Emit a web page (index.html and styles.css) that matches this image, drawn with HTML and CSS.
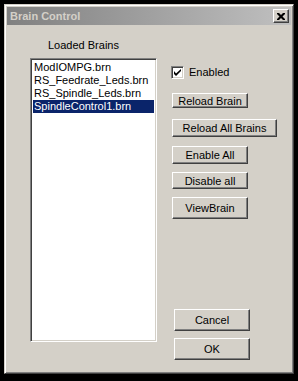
FILE: index.html
```html
<!DOCTYPE html>
<html lang="en">
<head>
    <meta charset="UTF-8">
    <title>Brain Control</title>
    <link rel="stylesheet" href="styles.css">
</head>
<body>
    <div class="window">
        <!-- title bar -->
        <div class="titlebar">
            <span class="title">Brain Control</span>
            <button class="close-btn">
                <svg width="8" height="7" viewBox="0 0 8 7">
                    <path d="M0 0h2l2 2 2-2h2v1l-2.5 2.5L8 6v1H6L4 5 2 7H0V6l2.5-2.5L0 1z" fill="#000"/>
                </svg>
            </button>
        </div>

        <div class="client">
            <!-- brains list -->
            <div class="left-col">
                <div class="list-label">Loaded Brains</div>
                <div class="listbox">
                    <div class="item">ModIOMPG.brn</div>
                    <div class="item">RS_Feedrate_Leds.brn</div>
                    <div class="item">RS_Spindle_Leds.brn</div>
                    <div class="item selected">SpindleControl1.brn</div>
                </div>
            </div>

            <!-- actions -->
            <div class="right-col">
                <label class="check-row">
                    <span class="checkbox">
                        <svg width="7" height="7" viewBox="0 0 7 7">
                            <path d="M0 2v3l2 2 5-5V-0L2 4.5z" fill="#000"/>
                        </svg>
                    </span>
                    Enabled
                </label>
                <button class="btn btn-reload">Reload Brain</button>
                <button class="btn btn-reload-all">Reload All Brains</button>
                <button class="btn btn-enable">Enable All</button>
                <button class="btn btn-disable">Disable all</button>
                <button class="btn btn-view">ViewBrain</button>

                <div class="bottom-btns">
                    <button class="btn btn-cancel">Cancel</button>
                    <button class="btn btn-ok">OK</button>
                </div>
            </div>
        </div>
    </div>
</body>
</html>
```

FILE: styles.css
```css
* {
    margin: 0;
    padding: 0;
    box-sizing: border-box;
}
body {
    width: 298px;
    height: 381px;
    background: #000;
    font-family: "Liberation Sans", Arial, sans-serif;
    font-size: 11px;
    color: #000;
    overflow: hidden;
}
.window {
    margin: 4px 0 0 4px;
    width: 290px;
    height: 370px;
    background: #d4d0c8;
    border: 1px solid;
    border-color: #d4d0c8 #404040 #404040 #d4d0c8;
    box-shadow: inset 1px 1px #fff, inset -1px -1px #808080;
    padding: 2px;
    display: flex;
    flex-direction: column;
}
/* title bar */
.titlebar {
    height: 18px;
    background: linear-gradient(to right, #808080, #c0c0c0);
    display: flex;
    align-items: center;
    justify-content: space-between;
    padding: 0 2px 0 3px;
}
.title {
    color: #d4d0c8;
    font-weight: bold;
    font-size: 11px;
}
.close-btn {
    width: 16px;
    height: 14px;
    background: #d4d0c8;
    border: 1px solid;
    border-color: #fff #404040 #404040 #fff;
    box-shadow: inset -1px -1px #808080;
    display: flex;
    align-items: center;
    justify-content: center;
}
/* content */
.client {
    flex: 1;
    display: flex;
    padding-left: 23px;
}
.left-col {
    width: 127px;
    display: flex;
    flex-direction: column;
}
.list-label {
    margin-top: 14px;
    padding-left: 18px;
    line-height: 13px;
}
.listbox {
    margin-top: 6px;
    height: 284px;
    background: #fff;
    border: 1px solid;
    border-color: #808080 #fff #fff #808080;
    box-shadow: inset 1px 1px #404040, inset -1px -1px #d4d0c8;
    padding: 2px;
}
.item {
    height: 13px;
    line-height: 13px;
    padding-left: 1px;
    white-space: nowrap;
}
.item.selected {
    background: #0a246a;
    color: #fff;
}
.right-col {
    flex: 1;
    margin-left: 14px;
    display: flex;
    flex-direction: column;
    align-items: flex-start;
}
.check-row {
    margin-top: 41px;
    display: flex;
    align-items: center;
    gap: 5px;
    line-height: 13px;
}
.checkbox {
    width: 13px;
    height: 13px;
    background: #fff;
    border: 1px solid;
    border-color: #808080 #fff #fff #808080;
    box-shadow: inset 1px 1px #404040, inset -1px -1px #d4d0c8;
    display: flex;
    align-items: center;
    justify-content: center;
}
.btn {
    margin-left: 1px;
    width: 76px;
    background: #d4d0c8;
    font-family: inherit;
    font-size: 11px;
    color: #000;
    border: 1px solid;
    border-color: #fff #404040 #404040 #fff;
    box-shadow: inset -1px -1px #808080;
    text-align: center;
}
.btn-reload {
    margin-top: 14px;
    height: 15px;
}
.btn-reload-all {
    margin-top: 11px;
    width: 105px;
    height: 18px;
}
.btn-enable {
    margin-top: 9px;
    height: 18px;
}
.btn-disable {
    margin-top: 8px;
    height: 17px;
}
.btn-view {
    margin-top: 8px;
    height: 22px;
}
.bottom-btns {
    margin-top: auto;
    margin-bottom: 11px;
    display: flex;
    flex-direction: column;
    gap: 7px;
}
.btn-cancel, .btn-ok {
    margin-left: 3px;
    height: 22px;
}
```
